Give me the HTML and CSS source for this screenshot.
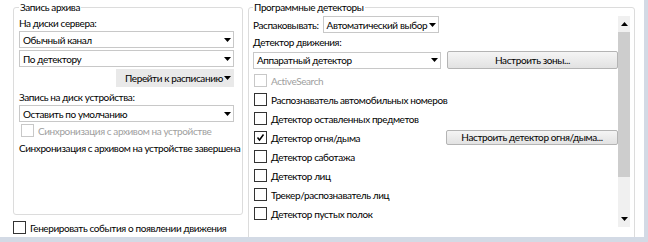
FILE: index.html
```html
<!DOCTYPE html>
<html>
<head>
    <title>Настройки канала</title>
    <meta charset="utf-8">
    <link rel="stylesheet" href="styles.css">
</head>
<body>
    <div class="window">
        <div class="left-col">
            <fieldset class="group group-archive">
                <legend>Запись архива</legend>
                <div class="label">На диски сервера:</div>
                <div class="combo">
                    <span>Обычный канал</span>
                    <svg class="arrow" width="7" height="4" viewBox="0 0 7 4"><path d="M0 0h7L3.5 4z"/></svg>
                </div>
                <div class="combo">
                    <span>По детектору</span>
                    <svg class="arrow" width="7" height="4" viewBox="0 0 7 4"><path d="M0 0h7L3.5 4z"/></svg>
                </div>
                <div class="btn-row">
                    <div class="split-btn">
                        <span>Перейти к расписанию</span>
                        <svg class="arrow" width="7" height="4" viewBox="0 0 7 4"><path d="M0 0h7L3.5 4z"/></svg>
                    </div>
                </div>
                <div class="label">Запись на диск устройства:</div>
                <div class="combo">
                    <span>Оставить по умолчанию</span>
                    <svg class="arrow" width="7" height="4" viewBox="0 0 7 4"><path d="M0 0h7L3.5 4z"/></svg>
                </div>
                <div class="check disabled sync-check"><span class="box"></span>Синхронизация с архивом на устройстве</div>
                <div class="status">Синхронизация с архивом на устройстве завершена</div>
            </fieldset>
            <div class="check check-events"><span class="box"></span>Генерировать события о появлении движения</div>
        </div>

        <fieldset class="group group-detectors">
            <legend>Программные детекторы</legend>
            <div class="scroll-area">
                <div class="scroll-content">
                    <div class="unpack-row">
                        <span>Распаковывать:</span>
                        <div class="combo combo-small">
                            <span>Автоматический выбор</span>
                            <svg class="arrow" width="7" height="4" viewBox="0 0 7 4"><path d="M0 0h7L3.5 4z"/></svg>
                        </div>
                    </div>
                    <div class="label motion-label">Детектор движения:</div>
                    <div class="pair-row motion-row">
                        <div class="combo combo-half">
                            <span>Аппаратный детектор</span>
                            <svg class="arrow" width="7" height="4" viewBox="0 0 7 4"><path d="M0 0h7L3.5 4z"/></svg>
                        </div>
                        <div class="button">Настроить зоны...</div>
                    </div>
                    <div class="check disabled"><span class="box"></span>ActiveSearch</div>
                    <div class="check"><span class="box"></span>Распознаватель автомобильных номеров</div>
                    <div class="check"><span class="box"></span>Детектор оставленных предметов</div>
                    <div class="pair-row">
                        <div class="check check-half">
                            <span class="box">
                                <svg width="11" height="11" viewBox="0 0 11 11"><path d="M2.5 5.5l2 2.5L8.5 2.5" fill="none" stroke="#000" stroke-width="1.5"/></svg>
                            </span>Детектор огня/дыма
                        </div>
                        <div class="button button-small">Настроить детектор огня/дыма...</div>
                    </div>
                    <div class="check"><span class="box"></span>Детектор саботажа</div>
                    <div class="check"><span class="box"></span>Детектор лиц</div>
                    <div class="check"><span class="box"></span>Трекер/распознаватель лиц</div>
                    <div class="check"><span class="box"></span>Детектор пустых полок</div>
                </div>
                <div class="scrollbar">
                    <div class="scroll-btn">
                        <svg width="7" height="4" viewBox="0 0 7 4"><path d="M0 4h7L3.5 0z"/></svg>
                    </div>
                    <div class="scroll-track">
                        <div class="scroll-thumb"></div>
                    </div>
                    <div class="scroll-btn">
                        <svg width="7" height="4" viewBox="0 0 7 4"><path d="M0 0h7L3.5 4z"/></svg>
                    </div>
                </div>
            </div>
        </fieldset>
    </div>
</body>
</html>
```

FILE: styles.css
```css
body {
    margin: 0;
    background: #d3dae5;
    font-family: Lato, "Noto Sans", sans-serif;
    font-size: 10px;
    letter-spacing: -0.4px;
    color: #000;
    white-space: nowrap;
}
.window {
    width: 631px;
    height: 237px;
    background: #fff;
    padding-left: 13px;
    display: flex;
    gap: 5px;
    overflow: hidden;
}
.left-col {
    width: 230px;
    flex: none;
    display: flex;
    flex-direction: column;
}
.group {
    box-sizing: border-box;
    margin: 0;
    border: 1px solid #dcdcdc;
    border-radius: 3px;
    min-width: 0;
}
.group legend {
    padding: 0 1px;
    margin-left: 0;
    line-height: 14px;
}
.group-archive {
    height: 218px;
    padding: 1px 8px 0 5px;
}
.group-detectors {
    width: 387px;
    height: 245px;
    flex: none;
    padding: 2px 4px 0 4px;
}
.label {
    line-height: 16px;
}
.combo {
    box-sizing: border-box;
    height: 17px;
    border: 1px solid #c8c8c8;
    display: flex;
    align-items: center;
    justify-content: space-between;
    padding: 0 2px 0 3px;
    margin-bottom: 2px;
}
.arrow {
    flex: none;
}
.btn-row {
    display: flex;
    justify-content: flex-end;
}
.split-btn {
    box-sizing: border-box;
    width: 118px;
    height: 18px;
    background: #e9e9e9;
    display: flex;
    align-items: center;
    justify-content: space-between;
    padding: 0 3px 0 9px;
}
.btn-row + .label {
    margin-top: 2px;
}
.check {
    display: flex;
    align-items: center;
    height: 19px;
    padding-left: 1px;
}
.check .box {
    width: 11px;
    height: 11px;
    border: 1px solid #333;
    background: #fff;
    margin-right: 4px;
    flex: none;
    display: flex;
}
.check.disabled {
    color: #a0a0a0;
}
.check.disabled .box {
    border-color: #c8c8c8;
}
.sync-check {
    height: 17px;
    padding-left: 2px;
    margin-top: -2px;
}
.status {
    line-height: 18px;
}
.check-events {
    margin-top: 3px;
    padding-left: 0;
}
.scroll-area {
    display: flex;
    height: 211px;
}
.scroll-content {
    flex: 1;
    min-width: 0;
}
.unpack-row {
    display: flex;
    align-items: center;
    gap: 4px;
}
.combo-small {
    width: 116px;
    margin-bottom: 0;
}
.motion-label {
    margin-top: 1px;
}
.pair-row {
    display: flex;
    align-items: center;
    gap: 6px;
}
.motion-row {
    margin: 1px 0 2px;
}
.combo-half {
    width: 188px;
    margin-bottom: 0;
}
.check-half {
    width: 186px;
}
.button {
    box-sizing: border-box;
    flex: 1;
    height: 18px;
    border: 1px solid #b4b4b4;
    border-radius: 2px;
    background: linear-gradient(#f5f5f5, #e2e2e2);
    text-align: center;
    line-height: 16px;
}
.button-small {
    height: 15px;
    line-height: 13px;
}
.scrollbar {
    width: 12px;
    flex: none;
    display: flex;
    flex-direction: column;
    background: #f0f0f0;
}
.scroll-btn {
    height: 16px;
    display: flex;
    align-items: center;
    justify-content: center;
}
.scroll-track {
    flex: 1;
}
.scroll-thumb {
    height: 145px;
    background: #cdcdcd;
}
```
